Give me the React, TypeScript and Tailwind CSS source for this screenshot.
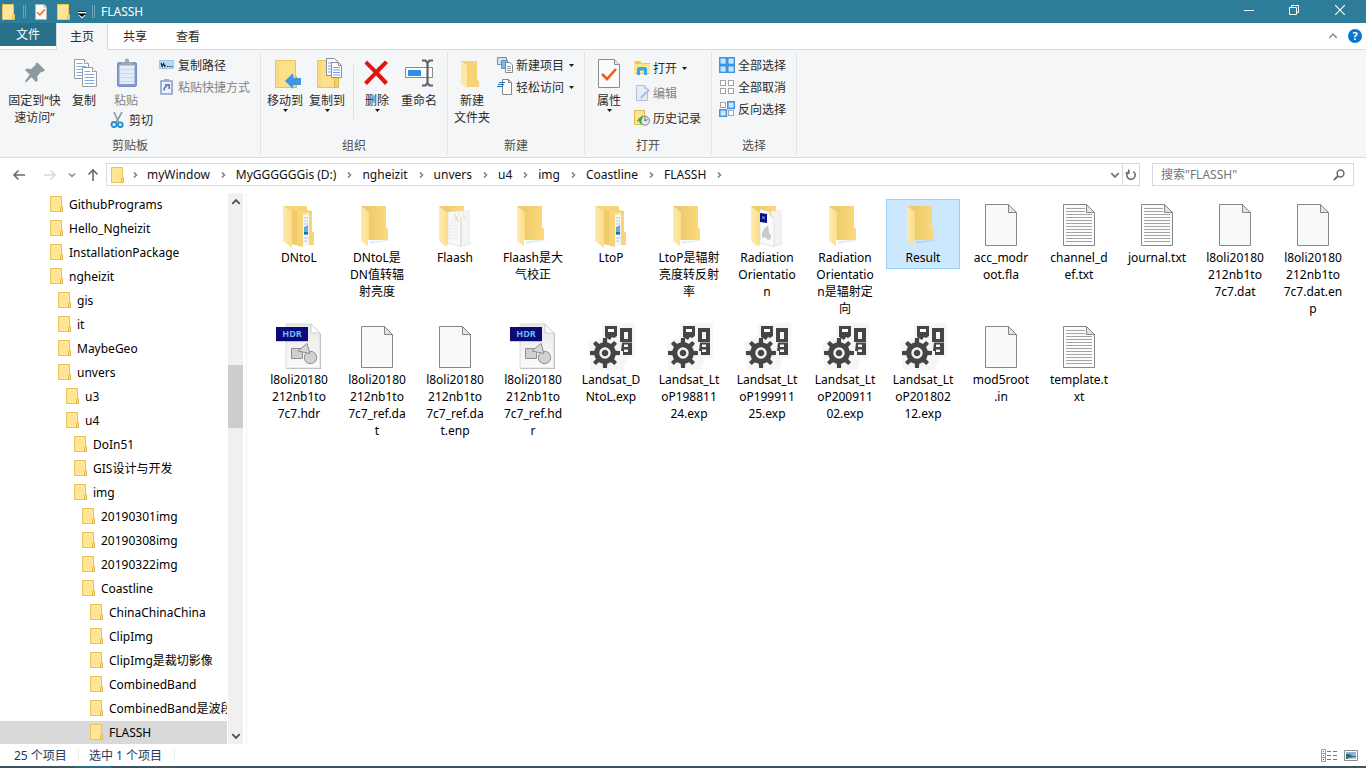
import React from "react";

type Kids = { children?: React.ReactNode };

/* ---------- small icons ---------- */

function SmallFolder() {
  return (
    <svg width="16" height="16" viewBox="-1 0 16 16" className="shrink-0" aria-hidden="true">
      <path d="M1.500 .5h11v15h-11z" fill="#ffe596" stroke="#eac456" />
      <path d="M11.500 15.500V11.500l1-1h1v5z" fill="#fbdc7c" stroke="#e6bd48" />
    </svg>
  );
}

function CheckDoc({ w, h }: { w: number; h: number }) {
  return (
    <svg width={w} height={h} viewBox="0 0 22 29" aria-hidden="true">
      <path d="M.5.5h16l5 5v23H.5z" fill="#fbfbfb" stroke="#8c8c8c" />
      <path d="M16.500.5v5h5" fill="#e4e4e4" stroke="#8c8c8c" />
      <path d="M4 15l5 5 9-10" fill="none" stroke="#f4591f" strokeWidth="2.600" />
    </svg>
  );
}

function DownArrow() {
  return (
    <svg width="5" height="3" viewBox="0 0 5 3" className="shrink-0" aria-hidden="true">
      <path d="M0 0h5L2.500 3z" fill="#1b1b1b" />
    </svg>
  );
}

function Chevron({ dir, size = 8, color = "#7a7a7a", width = 1.5 }: { dir: "up" | "down" | "right"; size?: number; color?: string; width?: number }) {
  const d = { up: "M1 5.500l3-3 3 3", down: "M1 2.500l3 3 3-3", right: "M3 1.500L5.500 4 3 6.500" }[dir];
  return (
    <svg width={size} height={size} viewBox="0 0 8 8" className="shrink-0" aria-hidden="true">
      <path d={d} fill="none" stroke={color} strokeWidth={width} />
    </svg>
  );
}

/* ---------- ribbon icons, 32 px ---------- */

function Big({ children }: Kids) {
  return (
    <svg width="32" height="32" viewBox="0 0 32 32" className="shrink-0" aria-hidden="true">
      {children}
    </svg>
  );
}

function Small({ children }: Kids) {
  return (
    <svg width="16" height="16" viewBox="0 0 16 16" className="shrink-0" aria-hidden="true">
      {children}
    </svg>
  );
}

const PinIcon = () => (
  <Big>
    <path d="M18.500 5.500L26 13l-2.200 2-1.600-.3-4 4.600.6 4.200-1.800 1.600-4.600-4.800L7 25.500 6 25l.5-1.500 4.200-6L6 13l1.800-1.500 4.400.4 4.500-4.200-.2-1.200z" fill="#8e999f" />
  </Big>
);

const PageStack = ({ x, y }: { x: number; y: number }) => (
  <g transform={`translate(${x} ${y})`}>
    <path d="M.5.5h10l4 4v15H.5z" fill="#fff" stroke="#9a9da1" />
    <path d="M10.500.5v4h4" fill="#fff" stroke="#9a9da1" />
    <path d="M2.500 4.500h6M2.500 7.500h10M2.500 10.500h10M2.500 13.500h10M2.500 16.500h10" stroke="#7ba9ee" />
  </g>
);

const CopyIcon = () => (
  <Big>
    <PageStack x={6} y={2} />
    <PageStack x={14} y={10} />
  </Big>
);

const PasteIcon = () => (
  <Big>
    <rect x="7.500" y="5.500" width="19" height="24" rx="1.500" fill="#819bc9" stroke="#7890c0" />
    <path d="M9.500 8h15v19h-15z" fill="#e3ecf8" />
    <path d="M10 12.500h14M10 16.500h14M10 20.500h14M10 24.500h14" stroke="#cbd8ed" />
    <path d="M11 8.500V5h4V3.500a2 2 0 014 0V5h4v3.500z" fill="#9aa8bc" />
  </Big>
);

const BigFolder = () => (
  <g>
    <path d="M6.500 3.500h20v27h-20z" fill="#ffe08a" stroke="#e8c360" />
    <path d="M9 4v26" stroke="#f2cf70" />
    <path d="M23.500 30.500V21l1.500-2h2.500v11.500z" fill="#f5cf69" stroke="#e3b94d" />
  </g>
);

const MoveToIcon = () => (
  <Big>
    <BigFolder />
    <path d="M16 24l8-8v5h8v7h-8v4z" fill="#3f97e4" />
  </Big>
);

const CopyToIcon = () => (
  <Big>
    <BigFolder />
    <g transform="translate(15 1)">
      <path d="M.5.500h8l3 3v14H.5z" fill="#fff" stroke="#8b8f94" />
      <path d="M2 5h5M2 8h6M2 11h6M2 14h6" stroke="#6f9fe8" />
      <path d="M5.500 4.500h7l3 3v12h-10z" fill="#fff" stroke="#8b8f94" />
      <path d="M12.500 4.500v3h3" fill="none" stroke="#8b8f94" />
      <path d="M7 9.500h7M7 12h7M7 14.500h7M7 17h7" stroke="#6f9fe8" />
    </g>
  </Big>
);

const DeleteIcon = () => (
  <Big>
    <path d="M3.500 6.500l2.500-3 9 9 9-9 3 2.500-9 9.500 9 9.500-3 3-9-9.500-9 9.500-3-3 9.500-9.500z" fill="#e11414" />
  </Big>
);

const RenameIcon = () => (
  <Big>
    <path d="M2.500 10.500h27v10h-27z" fill="#fff" stroke="#84898c" />
    <path d="M5 13h13v6H5z" fill="#2f8fe3" />
    <path d="M19 3.500h3.500L24.500 6l2-2.500H30M19 28.500h3.500l2-2.500 2 2.500H30M24.500 5v22" fill="none" stroke="#5f6366" strokeWidth="2.200" />
  </Big>
);

const NewFolderIcon = () => (
  <Big>
    <path d="M5 4h16v19l2 1v6H11z" fill="#f7d373" />
    <path d="M5 4l6 4v23l-6-4z" fill="#ffe8a6" />
  </Big>
);

const PathIcon = () => (
  <Small>
    <path d="M.5 3.500h14v8H.5z" fill="#b5daf7" stroke="#9cc4e4" />
    <path d="M2 6l1.200 3.500L4.500 6.500l1.200 3L6.500 8M8 9.500h1.300M10.300 9.500h1.300M12.500 9.500h1" fill="none" stroke="#20262b" strokeWidth="1.100" />
  </Small>
);

const ShortcutIcon = () => (
  <Small>
    <path d="M2 2h11v13H2z" fill="#eef3fb" stroke="#8aa0c6" strokeWidth="1.600" />
    <path d="M5 0h5v3H5z" fill="#9aabc6" />
    <path d="M5 11.500c0-3 1-4 3-4.500M6 5.800h4.200V10" fill="none" stroke="#5d7fb8" strokeWidth="1.700" />
  </Small>
);

const CutIcon = () => (
  <Small>
    <path d="M4 0l4.500 10M12 0L6.500 10" stroke="#8c98a0" strokeWidth="1.600" />
    <circle cx="4" cy="12.500" r="2.500" fill="none" stroke="#2089d0" strokeWidth="1.800" />
    <circle cx="10.300" cy="12.700" r="2.300" fill="none" stroke="#2089d0" strokeWidth="1.800" />
  </Small>
);

const NewItemIcon = () => (
  <Small>
    <path d="M.5.5h9v7h-9z" fill="#c9e6f8" stroke="#6d91aa" />
    <path d="M4.500 3.500h6v8h-6z" fill="#7db9e8" stroke="#7c8b96" />
    <path d="M8.500 5.500h4.500l2.500 2.500v7.500h-7z" fill="#fff" stroke="#85898c" />
    <path d="M10 9.500h4M10 11.500h4M10 13.500h4" stroke="#9aa2a8" />
  </Small>
);

const EasyAccessIcon = () => (
  <Small>
    <path d="M5.500.5h6l3 3v12h-9z" fill="#fff" stroke="#85898c" />
    <path d="M11.500.5v3h3" fill="none" stroke="#85898c" />
    <path d="M2 3.500h6M1 5.500h6M0 7.500h6" stroke="#2470b5" strokeWidth="1.200" />
  </Small>
);

const OpenIcon = () => (
  <Small>
    <path d="M.5 1h6l1 2H16v11H.5z" fill="#f2c84e" />
    <path d="M0 4h16v9H0z" fill="#ffe592" />
    <path d="M3 15V8.500L4.500 7h7L13 8.500V15h-3v-4.500H6V15z" fill="#35a9e4" />
  </Small>
);

const EditIcon = () => (
  <Small>
    <path d="M2.500.5h8l3 3v12h-11z" fill="#e6edf9" stroke="#b1bfda" />
    <path d="M10.500.5v3h3" fill="none" stroke="#b1bfda" />
    <path d="M6 14l1-3 7.500-7 1.500 1.500-7.500 7.500z" fill="#aebfdf" />
  </Small>
);

const HistoryIcon = () => (
  <Small>
    <path d="M.5.5h10v14H.5z" fill="#ffe38f" stroke="#dfba4d" />
    <circle cx="11" cy="10.700" r="4.500" fill="#e4e8e9" stroke="#7f888c" />
    <path d="M11 7.500v3.500l2.500-1.500" fill="none" stroke="#596267" />
    <path d="M9 5L5 8.200l-2.500 3H5c.4 2 1.600 3 3.500 3.500-1.400-2-1.300-3.500-.6-5z" fill="#37b53a" />
  </Small>
);

function SelectIcon({ on }: { on: [boolean, boolean, boolean, boolean] }) {
  const at: [number, number][] = [[0, 0], [8, 0], [0, 8], [8, 8]];
  return (
    <Small>
      {at.map(([x, y], i) =>
        on[i] ? (
          <rect key={i} x={x + 0.8} y={y + 0.8} width="6.600" height="6.600" fill="#cce6fd" stroke="#3b93de" strokeWidth="1.500" />
        ) : (
          <rect key={i} x={x + 1.5} y={y + 1.5} width="5" height="5" fill="#fff" stroke="#a6a6a6" />
        )
      )}
    </Small>
  );
}

/* ---------- ribbon parts ---------- */

type BigButtonProps = { icon: React.ReactNode; label: string; width: string; arrow?: boolean; disabled?: boolean };

function BigButton({ icon, label, width, arrow, disabled }: BigButtonProps) {
  return (
    <button
      type="button"
      disabled={disabled}
      className={`${width} flex shrink-0 flex-col items-center ${disabled ? "text-[#838383]" : "text-[#2b2b2b]"}`}
    >
      {icon}
      <span className="mt-[3px] text-center leading-[17px] whitespace-pre">{label}</span>
      {arrow && <DownArrow />}
    </button>
  );
}

type SmallButtonProps = { icon: React.ReactNode; label: string; arrow?: boolean; disabled?: boolean };

function SmallButton({ icon, label, arrow, disabled }: SmallButtonProps) {
  return (
    <button
      type="button"
      disabled={disabled}
      className={`flex h-[22px] items-center gap-[3px] whitespace-nowrap ${disabled ? "text-[#838383]" : "text-[#2b2b2b]"}`}
    >
      {icon}
      {label}
      {arrow && (
        <span className="pl-0.5">
          <DownArrow />
        </span>
      )}
    </button>
  );
}

function Group({ label, width, children }: { label: string; width: string } & Kids) {
  return (
    <section aria-label={label} className={`${width} flex shrink-0 flex-col border-r border-[#e2e3e4]`}>
      <div className="flex flex-1 items-start pt-[5px]">{children}</div>
      <h2 className="h-4 text-center leading-4 text-[#4f4f4f]">{label}</h2>
    </section>
  );
}

function Ribbon() {
  return (
    <div className="flex h-[108px] shrink-0 border-b border-[#dadbdc] bg-[#f5f6f7] pt-0.5 pb-[3px]">
      <Group label="剪贴板" width="w-[261px]">
        <BigButton icon={<PinIcon />} label={"固定到“快\n速访问”"} width="ml-[3px] w-[63px]" />
        <BigButton icon={<CopyIcon />} label="复制" width="w-[36px]" />
        <div className="ml-1 flex w-[53px] flex-col">
          <BigButton icon={<PasteIcon />} label="粘贴" width="w-[40px]" disabled />
          <div className="pl-1">
            <SmallButton icon={<CutIcon />} label="剪切" />
          </div>
        </div>
        <div className="-mt-[3px] flex flex-col">
          <SmallButton icon={<PathIcon />} label="复制路径" />
          <SmallButton icon={<ShortcutIcon />} label="粘贴快捷方式" disabled />
        </div>
      </Group>
      <Group label="组织" width="w-[187px]">
        <BigButton icon={<MoveToIcon />} label="移动到" width="ml-[3px] w-[42px]" arrow />
        <BigButton icon={<CopyToIcon />} label="复制到" width="w-[42px]" arrow />
        <div className="mx-[5px] mt-2 h-[54px] w-px bg-[#e0e1e2]" />
        <BigButton icon={<DeleteIcon />} label="删除" width="w-[36px]" arrow />
        <BigButton icon={<RenameIcon />} label="重命名" width="w-[48px]" />
      </Group>
      <Group label="新建" width="w-[137px]">
        <BigButton icon={<NewFolderIcon />} label={"新建\n文件夹"} width="ml-[3px] w-[42px]" />
        <div className="-mt-[3px] ml-1 flex flex-col">
          <SmallButton icon={<NewItemIcon />} label="新建项目" arrow />
          <SmallButton icon={<EasyAccessIcon />} label="轻松访问" arrow />
        </div>
      </Group>
      <Group label="打开" width="w-[127px]">
        <BigButton
          icon={
            <span className="flex h-8 items-center">
              <CheckDoc w={22} h={29} />
            </span>
          }
          label="属性"
          width="ml-1 w-[40px]"
          arrow
        />
        <div className="ml-[5px] flex flex-col gap-[3px]">
          <SmallButton icon={<OpenIcon />} label="打开" arrow />
          <SmallButton icon={<EditIcon />} label="编辑" disabled />
          <SmallButton icon={<HistoryIcon />} label="历史记录" />
        </div>
      </Group>
      <Group label="选择" width="w-[85px]">
        <div className="-mt-[3px] ml-[7px] flex flex-col">
          <SmallButton icon={<SelectIcon on={[true, true, true, true]} />} label="全部选择" />
          <SmallButton icon={<SelectIcon on={[false, false, false, false]} />} label="全部取消" />
          <SmallButton icon={<SelectIcon on={[false, true, true, false]} />} label="反向选择" />
        </div>
      </Group>
    </div>
  );
}

/* ---------- title bar and tabs ---------- */

function TitleBar() {
  return (
    <header className="flex h-[23px] shrink-0 items-center bg-[#2d7d9a] pr-0.5 text-white">
      <div className="flex flex-1 items-center">
        <SmallFolder />
        <span className="ml-[7px] h-[13px] w-[3px] border-x border-[#6ba4b8]" />
        <button type="button" aria-label="属性" className="ml-2 flex w-[14px] justify-center">
          <CheckDoc w={12} h={16} />
        </button>
        <button type="button" aria-label="新建文件夹" className="ml-[7px]">
          <SmallFolder />
        </button>
        <button type="button" aria-label="自定义快速访问工具栏" className="ml-[7px]">
          <svg width="8" height="16" viewBox="0 0 8 16" aria-hidden="true">
            <path d="M0 7.500h8" stroke="#10323f" />
            <path d="M0 8.500h8" stroke="#fff" />
            <path d="M.5 11h7L4 14.500z" fill="#fff" />
            <path d="M.5 10h7L4 13z" fill="#000" />
          </svg>
        </button>
        <span className="ml-1.5 h-[13px] w-[3px] border-x border-[#6ba4b8]" />
        <h1 className="ml-1.5">FLASSH</h1>
      </div>
      <button type="button" aria-label="最小化" className="flex h-full w-[46px] items-center justify-center">
        <svg width="10" height="10" viewBox="0 0 10 10"><path d="M0 3.500h10" stroke="#fff" /></svg>
      </button>
      <button type="button" aria-label="向下还原" className="flex h-full w-[44px] items-center justify-center pb-1">
        <svg width="10" height="10" viewBox="0 0 10 10"><path d="M.5 2.500h7v7h-7zM2.500 2V.5h7v7H8" fill="none" stroke="#fff" /></svg>
      </button>
      <button type="button" aria-label="关闭" className="flex h-full w-[48px] items-center justify-center pb-1">
        <svg width="10" height="10" viewBox="0 0 10 10"><path d="M0 0l10 10M10 0L0 10" stroke="#fff" strokeWidth="1.200" /></svg>
      </button>
    </header>
  );
}

function Tabs() {
  return (
    <nav className="flex h-[27px] shrink-0 items-start text-[#2b2b2b]">
      <div className="flex h-full border-b border-[#dadbdc]">
        <button type="button" className="h-[23px] w-[56px] bg-[#286f88] text-white">文件</button>
      </div>
      <button type="button" className="h-full w-[52px] border-x border-[#dadbdc] bg-[#f5f6f7]">主页</button>
      <div className="flex h-full flex-1 items-center border-b border-[#dadbdc]">
        <button type="button" className="w-[54px]">共享</button>
        <button type="button" className="w-[52px]">查看</button>
        <span className="flex-1" />
        <button type="button" aria-label="最小化功能区" className="mr-2.5">
          <Chevron dir="up" size={10} color="#8f9599" width={1.2} />
        </button>
        <button type="button" aria-label="帮助" className="mr-1 flex h-[14px] w-[14px] items-center justify-center rounded-full bg-[#0b74d1] text-[11px] leading-[14px] font-bold text-white">
          ?
        </button>
      </div>
    </nav>
  );
}

/* ---------- address bar ---------- */

const crumbs = ["myWindow", "MyGGGGGGis (D:)", "ngheizit", "unvers", "u4", "img", "Coastline", "FLASSH"];

function NavArrow({ label, d, color }: { label: string; d: string; color: string }) {
  return (
    <button type="button" aria-label={label}>
      <svg width="14" height="14" viewBox="0 0 14 14" aria-hidden="true">
        <path d={d} fill="none" stroke={color} strokeWidth="1.600" />
      </svg>
    </button>
  );
}

function AddressBar() {
  return (
    <div className="flex h-[35px] shrink-0 items-center pr-3 pb-0.5">
      <div className="flex w-[106px] shrink-0 items-center pl-3">
        <NavArrow label="返回" d="M13 7H2M6.500 2.500L2 7l4.500 4.500" color="#6a6a6a" />
        <span className="w-[17px]" />
        <NavArrow label="前进" d="M1 7h11M7.500 2.500L12 7l-4.500 4.500" color="#d9d9d9" />
        <button type="button" aria-label="最近浏览的位置" className="ml-[11px]">
          <Chevron dir="down" color="#8a8a8a" />
        </button>
        <span className="w-2.5" />
        <NavArrow label="上移" d="M7 13V2M2.500 6.500L7 2l4.500 4.500" color="#6a6a6a" />
      </div>
      <div className="flex h-[23px] flex-1 items-center border border-[#d9d9d9]">
        <span className="ml-0.5">
          <SmallFolder />
        </span>
        <span className="flex w-[19px] justify-center">
          <Chevron dir="right" />
        </span>
        <span className="w-[3px]" />
        {crumbs.map((c) => (
          <React.Fragment key={c}>
            <button type="button" className="whitespace-nowrap text-[#111]">{c}</button>
            <span className="flex w-[26px] justify-center">
              <Chevron dir="right" />
            </span>
          </React.Fragment>
        ))}
        <span className="flex-1" />
        <button type="button" aria-label="以前的位置" className="mr-0.5">
          <Chevron dir="down" size={10} />
        </button>
        <button type="button" aria-label="刷新" className="flex h-full w-[17px] items-center justify-center border-l border-[#d9d9d9]">
          <svg width="12" height="12" viewBox="0 0 12 12" aria-hidden="true">
            <path d="M8.300 2.600A4.200 4.200 0 113.300 2.900M3.800.500v3.700H.5" fill="none" stroke="#6d6d6d" strokeWidth="1.600" />
          </svg>
        </button>
      </div>
      <label className="ml-3 flex h-[23px] w-[202px] shrink-0 items-center border border-[#d9d9d9] px-2">
        <input type="search" aria-label="搜索" placeholder={'搜索"FLASSH"'} className="min-w-0 flex-1 outline-none placeholder:text-[#757575]" />
        <svg width="12" height="12" viewBox="0 0 12 12" aria-hidden="true">
          <circle cx="7.500" cy="4.500" r="3.400" fill="none" stroke="#6d6d6d" strokeWidth="1.500" />
          <path d="M5 7L.8 11.200" stroke="#6d6d6d" strokeWidth="1.800" />
        </svg>
      </label>
    </div>
  );
}

/* ---------- tree ---------- */

const tree: [number, string][] = [
  [0, "GithubPrograms"],
  [0, "Hello_Ngheizit"],
  [0, "InstallationPackage"],
  [0, "ngheizit"],
  [1, "gis"],
  [1, "it"],
  [1, "MaybeGeo"],
  [1, "unvers"],
  [2, "u3"],
  [2, "u4"],
  [3, "DoIn51"],
  [3, "GIS设计与开发"],
  [3, "img"],
  [4, "20190301img"],
  [4, "20190308img"],
  [4, "20190322img"],
  [4, "Coastline"],
  [5, "ChinaChinaChina"],
  [5, "ClipImg"],
  [5, "ClipImg是裁切影像"],
  [5, "CombinedBand"],
  [5, "CombinedBand是波段"],
  [5, "FLASSH"],
];

const indent = ["pl-12", "pl-14", "pl-16", "pl-[72px]", "pl-20", "pl-[88px]"];

function Tree() {
  return (
    <aside className="flex w-[247px] shrink-0 border-r border-[#f3f3f3]">
      <ul className="h-full w-[227px] overflow-hidden text-black">
        {tree.map(([level, name]) => (
          <li key={name}>
            <button
              type="button"
              className={`${indent[level]} flex h-6 w-full items-center gap-[5px] pb-0.5 whitespace-nowrap ${name === "FLASSH" ? "bg-[#d9d9d9]" : ""}`}
            >
              <SmallFolder />
              {name}
            </button>
          </li>
        ))}
      </ul>
      <div className="ml-px flex w-[15px] flex-col items-center bg-[#f0f0f0]">
        <button type="button" aria-label="向上滚动" className="flex h-[17px] items-center">
          <Chevron dir="up" size={10} color="#505050" />
        </button>
        <div className="grow-[155]" />
        <div className="h-[63px] w-full bg-[#cdcdcd]" />
        <div className="grow-[298]" />
        <button type="button" aria-label="向下滚动" className="flex h-[17px] items-center">
          <Chevron dir="down" size={10} color="#505050" />
        </button>
      </div>
    </aside>
  );
}

/* ---------- file icons, 48 px ---------- */

type Kind = "folder" | "folderNested" | "folderPages" | "folderHdr" | "page" | "text" | "hdr" | "exp";

function FileIcon({ kind }: { kind: Kind }) {
  return (
    <svg width="48" height="48" viewBox="0 0 48 48" className="shrink-0" aria-hidden="true">
      {kind === "folder" && (
        <>
          <path d="M17 43l22-4h-4l-18 1z" fill="#00000014" />
          <path d="M8 5h25v21l2 2v11H16z" fill="url(#folderBack)" />
          <path d="M8 5l8 6v27l-1 1v6L8 40z" fill="url(#folderFlap)" />
        </>
      )}
      {kind === "folderNested" && (
        <>
          <path d="M8 5h24v4l5 1v20l2 2v12H18z" fill="#f7d576" />
          <path d="M22 12l12-1v33l-12 1z" fill="#fbe08d" />
          <path d="M28 14l6-1v31l-6 1z" fill="#f4f7fa" />
          <path d="M29 17h4M29 20h4M29 23h4M29 37h4M29 40h4" stroke="#b9c6d2" />
          <path d="M29 26l4-2v10h-4z" fill="#65acd9" />
          <path d="M29 31h4v2h-4z" fill="#1f6f9f" />
          <path d="M17 8l11 6v32l-11-3z" fill="#f5d377" />
          <path d="M17 8l5 3v31l-5 1z" fill="#efca6c" />
          <path d="M8 5l9 6v36l-9-7z" fill="url(#folderFlap)" />
        </>
      )}
      {kind === "folderPages" && (
        <>
          <path d="M34 41l7 1-9 4z" fill="#00000018" />
          <path d="M8 5h25v30H17z" fill="url(#folderBack)" />
          <path d="M24 10h14v33l-7 2z" fill="#f5f5f6" stroke="#dcdcdc" strokeWidth=".6" />
          <path d="M17 11l9-1 4 7v29l-13-4z" fill="#f7f8f9" stroke="#d9dadb" strokeWidth=".6" />
          <path d="M23 11l1 8 5 2z" fill="#e9dfb8" />
          <path d="M31 11l1 6 4 1z" fill="#ece6cf" />
          <path d="M18 19h9M18 22h9M18 25h9M18 28h9M18 31h9M18 34h9M18 37h9" stroke="#e9ebed" />
          <path d="M30 17v29" stroke="#dadbdc" />
          <path d="M8 5l9 7v29l-1 5-8-6z" fill="url(#folderFlap)" />
        </>
      )}
      {kind === "folderHdr" && (
        <>
          <path d="M34 41l7 1-9 4z" fill="#00000018" />
          <path d="M8 5h25v30H17z" fill="url(#folderBack)" />
          <path d="M28 10h10v33l-7 2z" fill="#f3f3f4" stroke="#dcdcdc" strokeWidth=".6" />
          <path d="M17 8l9 3 5 7v28l-14-4z" fill="#fafafb" stroke="#d5d6d7" strokeWidth=".6" />
          <path d="M26 11c0 4 2 6 5 6" fill="#f2e2b0" />
          <path d="M17 12l7 1v9l-7-1z" fill="#0d0d80" />
          <path d="M19 15l3 .5v3L19 18z" fill="#3f6fd0" />
          <path d="M19 32l3-6 1 1 2-3 1 8 2 2v4l-3 1-3-3-3 1z" fill="#c9cacb" />
          <path d="M8 5l9 7v29l-1 5-8-6z" fill="url(#folderFlap)" />
        </>
      )}
      {(kind === "page" || kind === "text") && (
        <>
          <path d="M8.500 3.500h23l8 8v33h-31z" fill={kind === "page" ? "#f8f9f9" : "#fcfcfc"} stroke="#868787" />
          <path d="M31.500 3.500v8h8z" fill="#e2e2e2" stroke="#868787" />
          {kind === "text" && (
            <path d="M11 7.500h19M11 10.500h19M11 13.500h26M11 16.500h26M11 19.500h26M11 22.500h26M11 25.500h26M11 28.500h26M11 31.500h26M11 34.500h26M11 37.500h26M11 40.500h26" stroke="#a3a5a6" />
          )}
        </>
      )}
      {kind === "hdr" && (
        <>
          <path d="M11 2h25l10 9v35H11z" fill="#bdbdbd" />
          <path d="M11 1h25l9 9v35H11z" fill="url(#hdrPage)" stroke="#cfcfcf" strokeWidth=".7" />
          <path d="M36 1v9h9z" fill="#fdfdfd" stroke="#c4c4c4" strokeWidth=".8" />
          <path d="M16.500 25.500h11v10h-11z" fill="#cfcfcf" stroke="#8d8d8d" />
          <circle cx="35.500" cy="34.500" r="6.200" fill="#d2d2d2" stroke="#8d8d8d" />
          <path d="M32 20.500l3 10-12-2.500z" fill="#d8d8d8" stroke="#8d8d8d" />
          <path d="M1 4h32v14H1z" fill="#0a0a78" />
          <path d="M1 18h32v1H1z" fill="#00000030" />
          <text x="17" y="14" textAnchor="middle" fontSize="9" fontWeight="bold" fontFamily="Open Sans, sans-serif" fill="#78b8f5">HDR</text>
        </>
      )}
      {kind === "exp" && (
        <>
          <path d="M15 0h34v35h-9l-4 12H4L1 20l14-7z" fill="#f6f6f6" />
          <path d="M18 3h12v10l-3 2-2-1-2 3-5-3z" fill="#454545" />
          <path d="M21 6h6v3h-6z" fill="#fff" />
          <path d="M33 5h12v14H33zM35 19.500h10V32H36v-4h-2z" fill="#454545" />
          <path d="M37 9h4v7h-4zM37 21.500h4v2.500h-4zM37 26.500h4v2.500h-4z" fill="#f6f6f6" />
          <g transform="translate(18 30)">
            <circle r="13.500" fill="#f6f6f6" />
            <circle r="10.800" fill="#454545" />
            {[0, 45, 90, 135, 180, 225, 270, 315].map((a) => (
              <path key={a} d="M-2.300-9l.3-6h4l.3 6z" transform={`rotate(${a})`} fill="#454545" />
            ))}
            <circle r="4.500" fill="none" stroke="#f6f6f6" strokeWidth="2.400" />
          </g>
        </>
      )}
    </svg>
  );
}

const files: { kind: Kind; name: string }[] = [
  { kind: "folderNested", name: "DNtoL" },
  { kind: "folder", name: "DNtoL是\nDN值转辐\n射亮度" },
  { kind: "folderPages", name: "Flaash" },
  { kind: "folder", name: "Flaash是大\n气校正" },
  { kind: "folderNested", name: "LtoP" },
  { kind: "folder", name: "LtoP是辐射\n亮度转反射\n率" },
  { kind: "folderHdr", name: "Radiation\nOrientatio\nn" },
  { kind: "folder", name: "Radiation\nOrientatio\nn是辐射定\n向" },
  { kind: "folder", name: "Result" },
  { kind: "page", name: "acc_modr\noot.fla" },
  { kind: "text", name: "channel_d\nef.txt" },
  { kind: "text", name: "journal.txt" },
  { kind: "page", name: "l8oli20180\n212nb1to\n7c7.dat" },
  { kind: "page", name: "l8oli20180\n212nb1to\n7c7.dat.en\np" },
  { kind: "hdr", name: "l8oli20180\n212nb1to\n7c7.hdr" },
  { kind: "page", name: "l8oli20180\n212nb1to\n7c7_ref.da\nt" },
  { kind: "page", name: "l8oli20180\n212nb1to\n7c7_ref.da\nt.enp" },
  { kind: "hdr", name: "l8oli20180\n212nb1to\n7c7_ref.hd\nr" },
  { kind: "exp", name: "Landsat_D\nNtoL.exp" },
  { kind: "exp", name: "Landsat_Lt\noP198811\n24.exp" },
  { kind: "exp", name: "Landsat_Lt\noP199911\n25.exp" },
  { kind: "exp", name: "Landsat_Lt\noP200911\n02.exp" },
  { kind: "exp", name: "Landsat_Lt\noP201802\n12.exp" },
  { kind: "page", name: "mod5root\n.in" },
  { kind: "text", name: "template.t\nxt" },
];

function Files() {
  return (
    <main className="min-w-0 flex-1 overflow-hidden pt-1.5 pl-[15px]">
      <svg width="0" height="0" className="absolute" aria-hidden="true">
        <defs>
          <linearGradient id="folderBack">
            <stop offset=".3" stopColor="#eccb6c" />
            <stop offset="1" stopColor="#fddb7c" />
          </linearGradient>
          <linearGradient id="folderFlap">
            <stop offset="0" stopColor="#ffebac" />
            <stop offset="1" stopColor="#fbdd88" />
          </linearGradient>
          <linearGradient id="hdrPage" x2="0" y2="1">
            <stop offset="0" stopColor="#e9e9e9" />
            <stop offset="1" stopColor="#fbfbfb" />
          </linearGradient>
        </defs>
      </svg>
      <ul className="grid grid-cols-[repeat(auto-fill,74px)] items-start gap-x-1 gap-y-px">
        {files.map(({ kind, name }) => (
          <li key={name}>
            <button
              type="button"
              className={`flex w-full flex-col items-center border pt-px pb-0.5 text-black ${name === "Result" ? "border-[#99d1ff] bg-[#cce8ff]" : "border-transparent"}`}
            >
              <FileIcon kind={kind} />
              <span className="text-center leading-[17px] whitespace-pre">{name}</span>
            </button>
          </li>
        ))}
      </ul>
    </main>
  );
}

/* ---------- status bar ---------- */

function StatusBar() {
  return (
    <footer className="shrink-0 text-[#1e395b]">
      <div className="flex h-[22px] items-center pr-2 pl-3.5">
        <span className="w-[64px]">25 个项目</span>
        <span className="h-[11px] w-px bg-[#ececec]" />
        <span className="w-[95px] pl-2.5">选中 1 个项目</span>
        <span className="h-[11px] w-px bg-[#ececec]" />
        <span className="flex-1" />
        <button type="button" aria-label="详细信息">
          <svg width="16" height="13" viewBox="0 0 16 13" aria-hidden="true">
            <path d="M.5.5h4v12h-4zM.5 4.500h4M.5 8.500h4" fill="#fff" stroke="#9a9a9a" />
            <path d="M6 2.500h4M12 2.500h4M6 6.500h4M12 6.500h4M6 10.500h4M12 10.500h4" stroke="#757575" />
            <path d="M2 2h1v1H2z" fill="#4b8f6a" />
            <path d="M2 6h1v1H2z" fill="#2f8fe3" />
            <path d="M2 10h1v1H2z" fill="#d11" />
          </svg>
        </button>
        <button type="button" aria-label="大缩略图" className="ml-[7px]">
          <svg width="14" height="11" viewBox="0 0 14 11" aria-hidden="true">
            <path d="M.5.5h13v10H.5z" fill="#fff" stroke="#8f8f8f" />
            <path d="M2 2h10v7H2z" fill="#86b4ec" />
            <path d="M2 4h4l2 2h4v3H2z" fill="#396b6f" />
            <path d="M4 8l8-1v2H4z" fill="#b7cfe3" />
          </svg>
        </button>
      </div>
      <div className="flex h-0.5 bg-[#3d5563]">
        <span className="ml-[75px] w-9 bg-[#2a6d86]" />
      </div>
    </footer>
  );
}

export default function App() {
  return (
    <div className="flex h-screen flex-col overflow-hidden bg-white font-['Noto_Sans','Noto_Sans_CJK_SC',sans-serif] text-[12px] leading-[17px]">
      <TitleBar />
      <Tabs />
      <Ribbon />
      <AddressBar />
      <div className="flex min-h-0 flex-1">
        <Tree />
        <Files />
      </div>
      <StatusBar />
    </div>
  );
}
